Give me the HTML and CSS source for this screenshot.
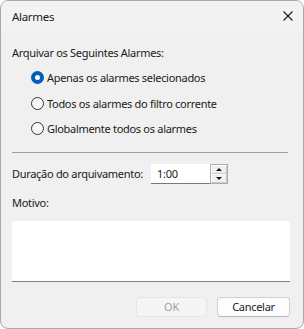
FILE: index.html
```html
<!DOCTYPE html>
<html lang="pt">
<head>
    <meta charset="UTF-8">
    <title>Alarmes</title>
    <link rel="stylesheet" href="styles.css">
</head>
<body>
    <div class="window">
        <div class="titlebar">
            <span class="title">Alarmes</span>
            <svg class="close" width="10" height="10" viewBox="0 0 10 10">
                <path d="M0.5 0.5 L9.5 9.5 M9.5 0.5 L0.5 9.5" stroke="#1a1a1a" stroke-width="1.1" fill="none"/>
            </svg>
        </div>
        <div class="content">
            <div class="group-label">Arquivar os Seguintes Alarmes:</div>

            <div class="radio-list">
                <label class="radio-row">
                    <span class="radio checked"></span>
                    <span>Apenas os alarmes selecionados</span>
                </label>
                <label class="radio-row">
                    <span class="radio"></span>
                    <span>Todos os alarmes do filtro corrente</span>
                </label>
                <label class="radio-row">
                    <span class="radio"></span>
                    <span>Globalmente todos os alarmes</span>
                </label>
            </div>

            <div class="separator"></div>

            <div class="duration-row">
                <span class="duration-label">Duração do arquivamento:</span>
                <div class="spin-edit">
                    <span class="spin-value">1:00</span>
                    <div class="spin-buttons">
                        <span class="spin-btn"><span class="arrow-up"></span></span>
                        <span class="spin-btn"><span class="arrow-down"></span></span>
                    </div>
                </div>
            </div>

            <div class="motivo-label">Motivo:</div>
            <div class="memo"></div>

            <div class="button-row">
                <button class="btn disabled">OK</button>
                <button class="btn">Cancelar</button>
            </div>
        </div>
    </div>
</body>
</html>
```

FILE: styles.css
```css
html, body {
    margin: 0;
    padding: 0;
    background: #ffffff;
}
body {
    font-family: "Noto Sans", "Open Sans", sans-serif;
    font-size: 11px;
    letter-spacing: -0.3px;
    color: #1a1a1a;
}
.window {
    width: 302px;
    height: 327px;
    border: 1px solid #a9a9a9;
    border-radius: 8px;
    background: #f0f0f0;
    overflow: hidden;
    display: flex;
    flex-direction: column;
}
.titlebar {
    height: 30px;
    background: #f3f3f3;
    display: flex;
    align-items: center;
    justify-content: space-between;
    padding: 0 10px 0 11px;
}
.title {
    font-size: 11.5px;
}
.close {
    display: block;
}
.content {
    padding: 0 13px 0 11px;
    display: flex;
    flex-direction: column;
}
.group-label {
    margin-top: 14px;
    height: 16px;
    line-height: 16px;
}
.radio-list {
    margin-top: 4px;
    padding-left: 19px;
    display: flex;
    flex-direction: column;
}
.radio-row {
    height: 25.5px;
    display: flex;
    align-items: center;
    gap: 3px;
}
.radio {
    width: 11px;
    height: 11px;
    border: 1px solid #333333;
    border-radius: 50%;
    background: #f7f7f7;
    box-sizing: content-box;
    flex: none;
}
.radio.checked {
    width: 5px;
    height: 5px;
    border: 4px solid #005fb8;
    background: #ffffff;
}
.separator {
    margin-top: 10px;
    margin-right: 2px;
    height: 1px;
    background: #a0a0a0;
}
.duration-row {
    margin-top: 11px;
    height: 20px;
    display: flex;
    align-items: center;
}
.duration-label {
    width: 139px;
    white-space: nowrap;
}
.spin-edit {
    display: flex;
    height: 20px;
}
.spin-value {
    width: 53px;
    padding-left: 6px;
    background: #ffffff;
    border-bottom: 1px solid #7a7a7a;
    line-height: 20px;
}
.spin-buttons {
    width: 16px;
    height: 18px;
    border: 1px solid #adadad;
    display: flex;
    flex-direction: column;
    background: #f0f0f0;
}
.spin-btn {
    flex: 1;
    display: flex;
    align-items: center;
    justify-content: center;
    border: 1px solid #ffffff;
    border-right-color: #c8c8c8;
    border-bottom-color: #c8c8c8;
}
.arrow-up {
    width: 0;
    height: 0;
    border-left: 3px solid transparent;
    border-right: 3px solid transparent;
    border-bottom: 3px solid #1a1a1a;
}
.arrow-down {
    width: 0;
    height: 0;
    border-left: 3px solid transparent;
    border-right: 3px solid transparent;
    border-top: 3px solid #1a1a1a;
}
.motivo-label {
    margin-top: 11px;
    height: 16px;
    line-height: 16px;
}
.memo {
    margin-top: 10px;
    height: 60px;
    background: #ffffff;
    border-bottom: 1px solid #808080;
}
.button-row {
    margin-top: 15px;
    display: flex;
    justify-content: flex-end;
    gap: 10px;
}
.btn {
    width: 73px;
    height: 20px;
    padding: 0;
    font-family: inherit;
    font-size: 11px;
    letter-spacing: -0.3px;
    color: #1a1a1a;
    background: #fdfdfd;
    border: 1px solid #d0d0d0;
    border-bottom-color: #b8b8b8;
    border-radius: 4px;
}
.btn.disabled {
    width: 71px;
    color: #a0a0a0;
    background: #f5f5f5;
    border-color: #e5e5e5;
}
```
